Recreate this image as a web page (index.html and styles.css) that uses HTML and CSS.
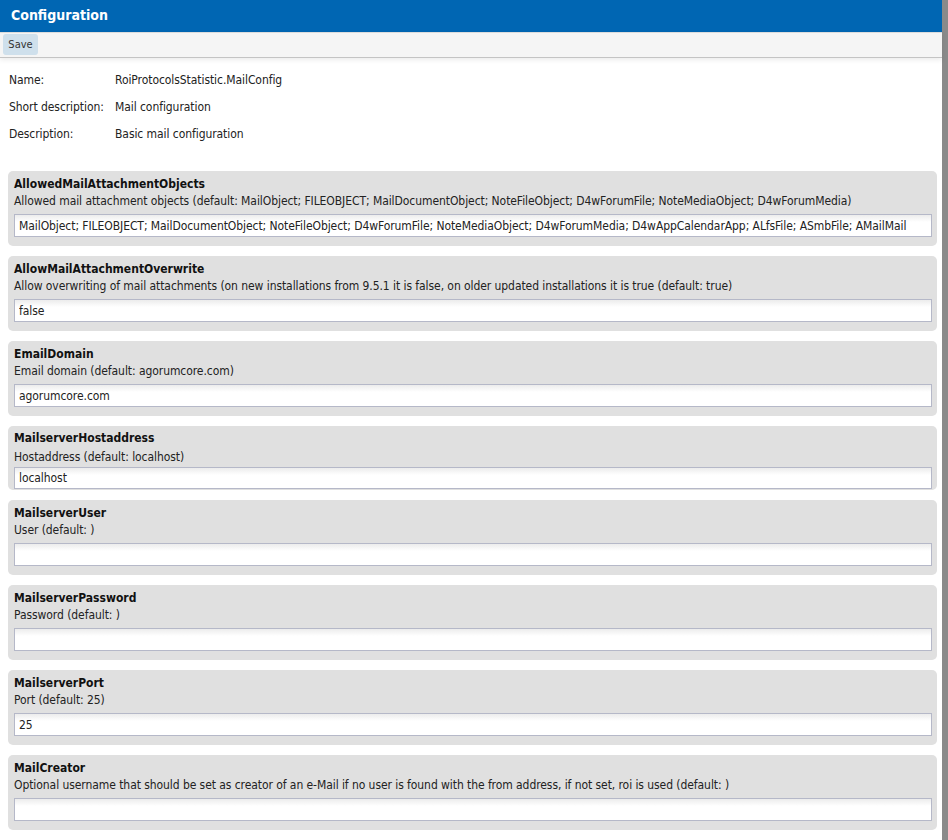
FILE: index.html
```
<!DOCTYPE html>
<html>
<head>
<meta charset="utf-8">
<link rel="stylesheet" href="styles.css">
</head>
<body>
<div class="app">
  <div class="main">
    <div class="header">Configuration</div>
    <div class="toolbar"><button class="btn">Save</button></div>
    <div class="info">
      <div class="lbl">Name:</div><div class="val">RoiProtocolsStatistic.MailConfig</div>
      <div class="lbl">Short description:</div><div class="val">Mail configuration</div>
      <div class="lbl">Description:</div><div class="val">Basic mail configuration</div>
    </div>
    <div class="cards">
      <div class="card">
        <div class="title">AllowedMailAttachmentObjects</div>
        <div class="desc">Allowed mail attachment objects (default: MailObject; FILEOBJECT; MailDocumentObject; NoteFileObject; D4wForumFile; NoteMediaObject; D4wForumMedia)</div>
        <input class="field" type="text" value="MailObject; FILEOBJECT; MailDocumentObject; NoteFileObject; D4wForumFile; NoteMediaObject; D4wForumMedia; D4wAppCalendarApp; ALfsFile; ASmbFile; AMailMail">
      </div>
      <div class="card">
        <div class="title">AllowMailAttachmentOverwrite</div>
        <div class="desc">Allow overwriting of mail attachments (on new installations from 9.5.1 it is false, on older updated installations it is true (default: true)</div>
        <input class="field" type="text" value="false">
      </div>
      <div class="card">
        <div class="title">EmailDomain</div>
        <div class="desc">Email domain (default: agorumcore.com)</div>
        <input class="field" type="text" value="agorumcore.com">
      </div>
      <div class="card compact">
        <div class="title">MailserverHostaddress</div>
        <div class="desc">Hostaddress (default: localhost)</div>
        <input class="field" type="text" value="localhost">
      </div>
      <div class="card">
        <div class="title">MailserverUser</div>
        <div class="desc">User (default: )</div>
        <input class="field" type="text" value="">
      </div>
      <div class="card">
        <div class="title">MailserverPassword</div>
        <div class="desc">Password (default: )</div>
        <input class="field" type="text" value="">
      </div>
      <div class="card">
        <div class="title">MailserverPort</div>
        <div class="desc">Port (default: 25)</div>
        <input class="field" type="text" value="25">
      </div>
      <div class="card">
        <div class="title">MailCreator</div>
        <div class="desc">Optional username that should be set as creator of an e-Mail if no user is found with the from address, if not set, roi is used (default: )</div>
        <input class="field" type="text" value="">
      </div>
    </div>
  </div>
  <div class="splitter"></div>
</div>
</body>
</html>
```
FILE: styles.css
```
html, body {
  margin: 0;
  padding: 0;
  height: 100%;
  overflow: hidden;
  background: #fff;
}
body {
  font-family: "DejaVu Sans Condensed", "DejaVu Sans", sans-serif;
  font-size: 12px;
  letter-spacing: -0.07px;
  color: #222;
}
.app {
  display: flex;
  height: 840px;
}
.main {
  flex: 1;
  min-width: 0;
  display: flex;
  flex-direction: column;
}
.splitter {
  width: 6px;
  background: #8a8a8a;
}
.header {
  height: 32px;
  background: #0066b3;
  color: #fff;
  font-weight: bold;
  font-size: 14px;
  letter-spacing: 0;
  line-height: 30px;
  padding-left: 11px;
  box-sizing: border-box;
}
.toolbar {
  height: 26px;
  background: #f5f5f5;
  border-top: 1px solid #dcdcdc;
  border-bottom: 1px solid #c4c4c4;
  box-sizing: border-box;
  padding: 1px 3px;
  box-shadow: 0 2px 5px rgba(0,0,0,0.08);
  position: relative;
}
.btn {
  font-family: inherit;
  font-size: 11px;
  color: #333;
  background: #cfe0ec;
  border: none;
  border-radius: 3px;
  height: 21px;
  width: 35px;
  padding: 0;
  margin: 0;
}
.info {
  display: grid;
  grid-template-columns: 106px auto;
  grid-auto-rows: 27px;
  align-items: center;
  padding: 8px 0 0 9px;
  color: #222;
}
.cards {
  display: flex;
  flex-direction: column;
  gap: 10px;
  padding: 24px 5px 0 8px;
}
.card {
  background: #e0e0e0;
  border-radius: 5px;
  padding: 5px 5px 9px 6px;
  display: flex;
  flex-direction: column;
}
.title {
  font-weight: bold;
  line-height: 16px;
  color: #111;
  letter-spacing: 0;
}
.desc {
  margin-top: 1px;
  line-height: 17px;
  color: #222;
  white-space: nowrap;
}
.field {
  margin: 4px 0 0 0;
  height: 23px;
  box-sizing: border-box;
  border: 1px solid #b5b8c8;
  background: linear-gradient(#ececec, #ffffff 7px);
  font-family: inherit;
  font-size: 12px;
  letter-spacing: -0.07px;
  color: #222;
  padding: 0 4px;
  outline: none;
}
.card.compact {
  padding-top: 4px;
  padding-bottom: 1px;
}
.card.compact .desc {
  margin-top: 3px;
}
.card.compact .field {
  margin-top: 1px;
  height: 22px;
}
```
